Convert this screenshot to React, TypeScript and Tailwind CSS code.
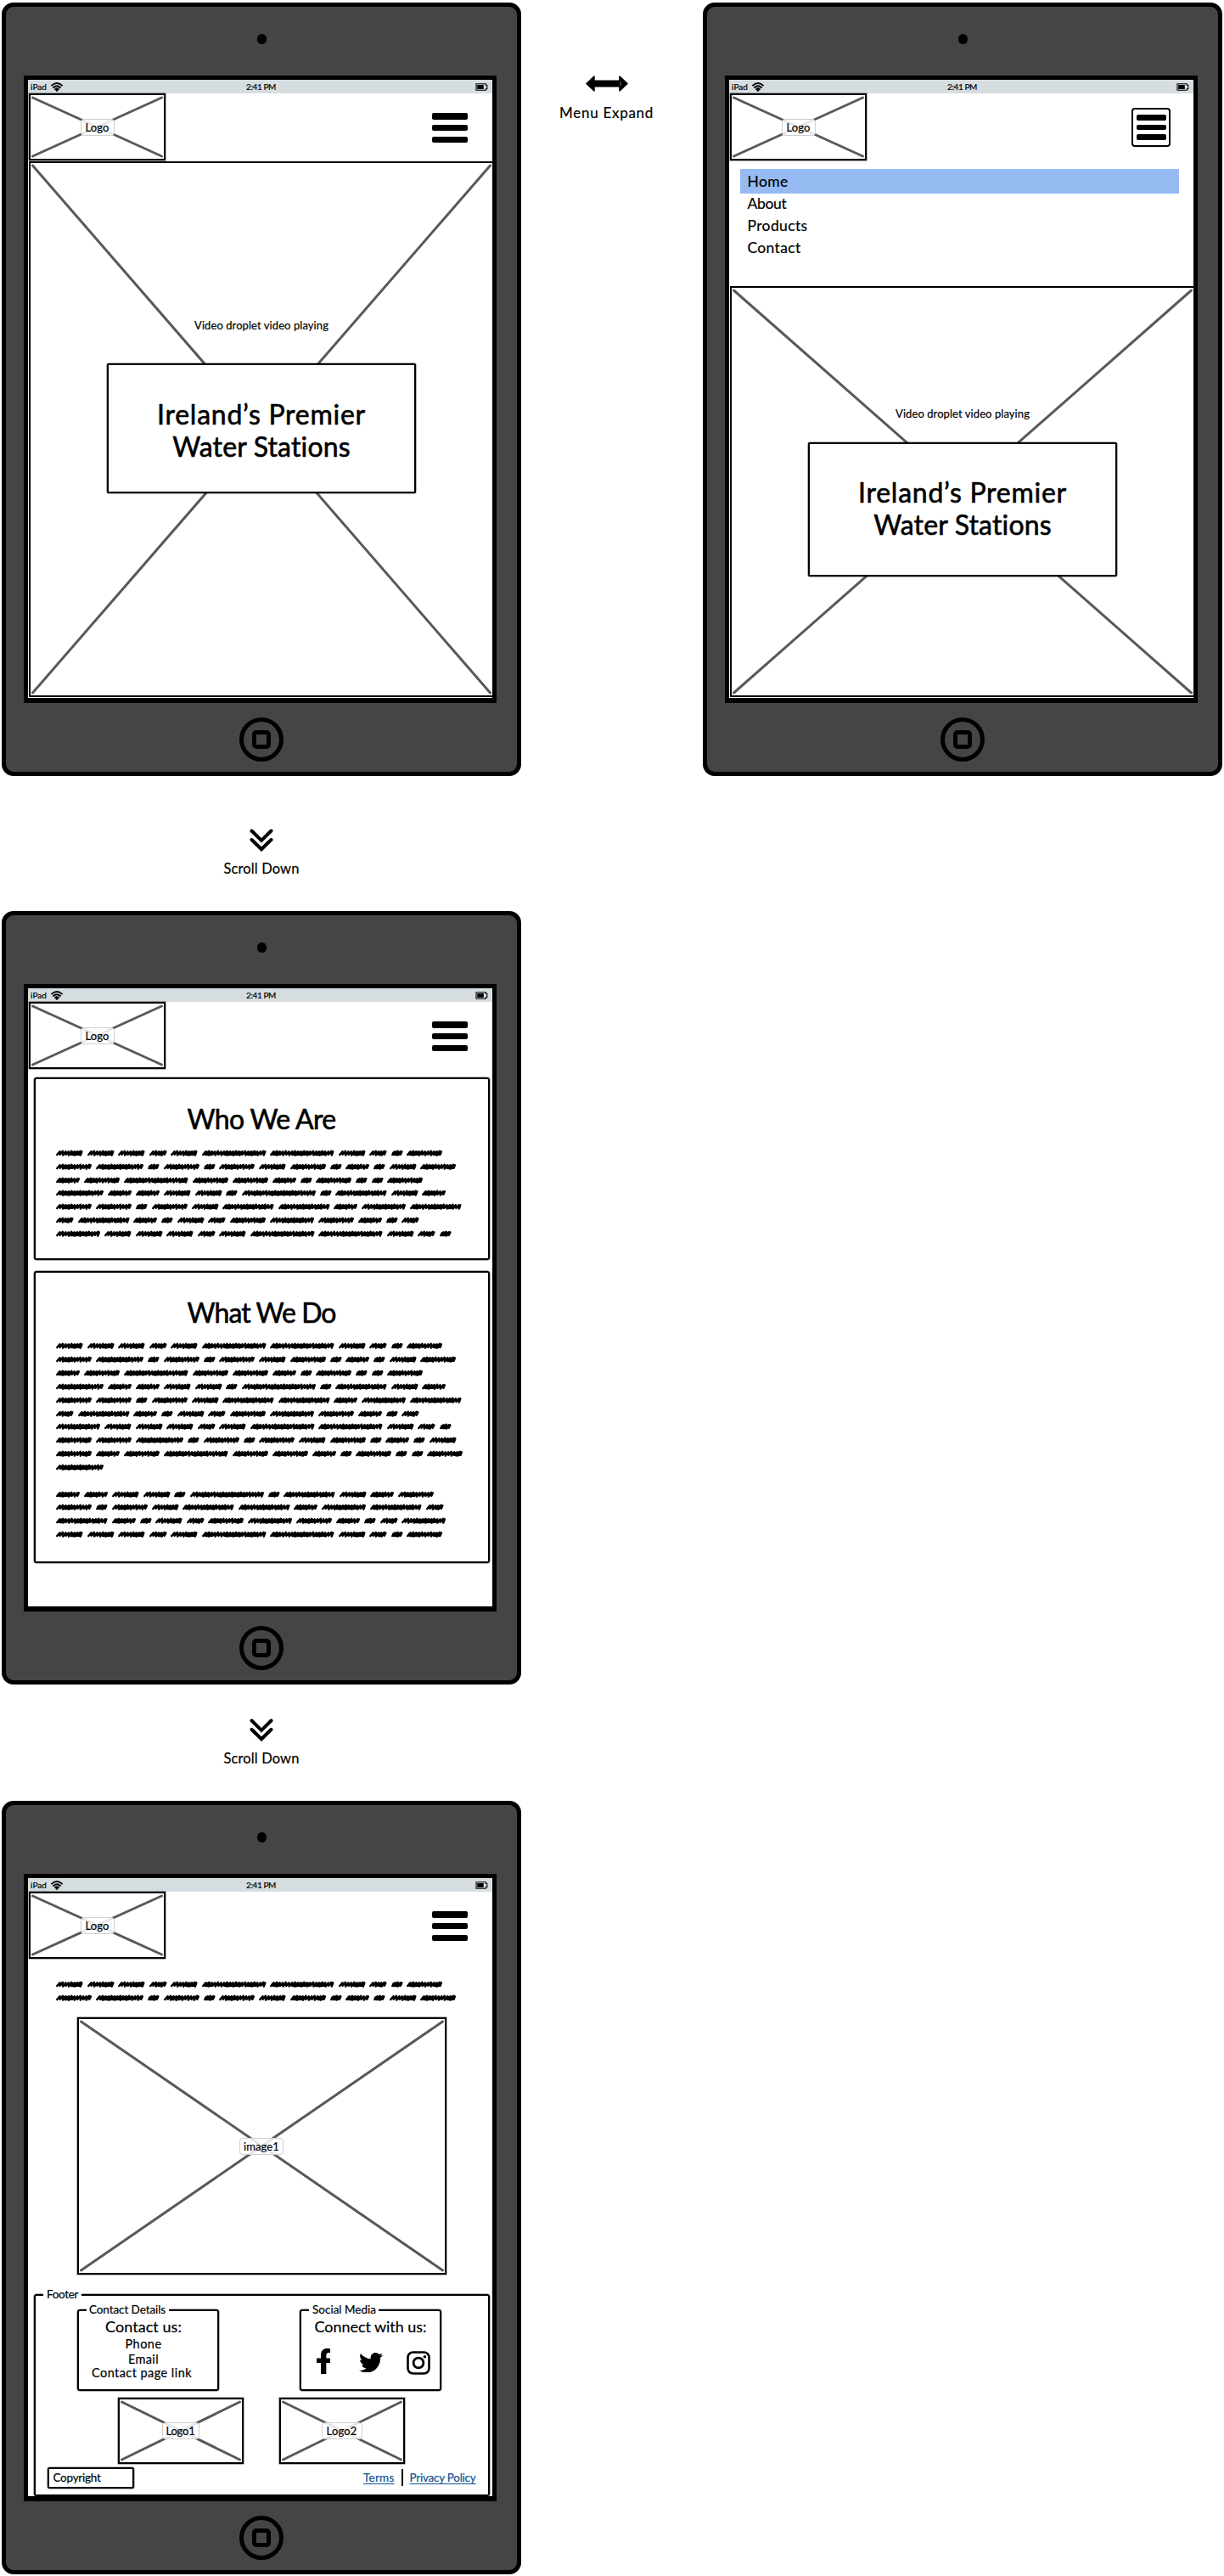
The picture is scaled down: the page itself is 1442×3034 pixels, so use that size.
import { useLayoutEffect, useRef, useState, type ReactNode } from "react";
import { FaFacebookF, FaTwitter } from "react-icons/fa";

/* Text whose letter spacing is adjusted so that the run is exactly `w` pixels wide. */
function Fit({ w, className = "", children }: { w: number; className?: string; children: string }) {
  const ref = useRef<HTMLSpanElement>(null);
  const [spacing, setSpacing] = useState(0);
  useLayoutEffect(() => {
    if (ref.current) {
      const natural = ref.current.getBoundingClientRect().width;
      setSpacing((w - natural) / children.length);
    }
  }, []);
  return (
    <span ref={ref} className={`inline-block whitespace-nowrap ${className}`} style={{ letterSpacing: `${spacing}px` }}>
      {children}
    </span>
  );
}

function Cross({ w, h }: { w: number; h: number }) {
  return (
    <svg className="absolute -top-0.5 -left-0.5" width={w} height={h} viewBox={`0 0 ${w} ${h}`}>
      <path
        d={`M4.5 5L${w - 4.5} ${h - 5}M${w - 4.5} 5L4.5 ${h - 5}`}
        stroke="#595959"
        strokeWidth="3"
        strokeLinecap="round"
        fill="none"
      />
    </svg>
  );
}

function Placeholder({ w, h, label, labelW, textW, box }: { w: number; h: number; label: string; labelW: string; textW: number; box: string }) {
  return (
    <div className={`relative flex shrink-0 items-center justify-center border-2 border-black bg-white ring-[0.5px] ring-black/60 ${box}`}>
      <Cross w={w} h={h} />
      <div className={`relative flex h-5 items-center justify-center rounded border border-[#cfcfcf] bg-white/85 ${labelW}`}>
        <Fit w={textW} className="text-[13px] leading-5">{label}</Fit>
      </div>
    </div>
  );
}

function StatusBar() {
  return (
    <div className="flex h-4 shrink-0 items-center bg-[#d6dde0] pl-[3px] text-[10px] leading-4">
      <Fit w={19}>iPad</Fit>
      <svg className="ml-[5px]" width="14" height="11" viewBox="0 0 14 11">
        <g fill="none" stroke="black" strokeLinecap="round" strokeWidth="1.9">
          <path d="M1 3.6Q7-1.6 13 3.6" />
          <path d="M3 6Q7 2.4 11 6" />
          <path d="M5 8.1Q7 6.3 9 8.1" />
        </g>
        <circle cx="7" cy="9.4" r="1.4" />
      </svg>
      <Fit w={35} className="ml-[216px]">2:41 PM</Fit>
      <svg className="ml-[235px]" width="15" height="9" viewBox="0 0 15 9">
        <path d="M1 .7H12.3V2.3H13.8V6.7H12.3V8.3H1Z" fill="#d6dde0" stroke="black" strokeWidth="1.1" />
        <rect x="2.2" y="2" width="7.6" height="5" />
      </svg>
    </div>
  );
}

function Header({ open = false }: { open?: boolean }) {
  return (
    <div className="flex h-[79px] shrink-0 pl-px">
      <Placeholder w={161} h={79} label="Logo" labelW="w-10" textW={28} box="h-[79px] w-[161px]" />
      {open ? (
        <div className="mt-[17px] ml-[312px] flex h-[46px] w-[46px] flex-col items-center justify-center gap-[5px] rounded-[4px] border-2 border-black">
          <i className="h-[6.5px] w-[35px] rounded-[2px] bg-black" />
          <i className="h-[6.5px] w-[35px] rounded-[2px] bg-black" />
          <i className="h-[6.5px] w-[35px] rounded-[2px] bg-black" />
        </div>
      ) : (
        <div className="mt-[23px] ml-[313.5px] flex w-[42px] flex-col gap-[6.3px]">
          <i className="h-[7.5px] rounded-[2px] bg-black" />
          <i className="h-[7.5px] rounded-[2px] bg-black" />
          <i className="h-[7.5px] rounded-[2px] bg-black" />
        </div>
      )}
    </div>
  );
}

function Tablet({ open, children }: { open?: boolean; children: ReactNode }) {
  return (
    <div className="flex h-[911px] w-[612px] shrink-0 flex-col rounded-[14px] border-5 border-black bg-[#454545]">
      <div className="mt-8 h-3 w-[11px] shrink-0 self-center rounded-full bg-black" />
      <div className="mt-[37px] ml-[21px] flex h-[739px] w-[557px] shrink-0 flex-col border-5 border-b-6 border-black bg-white">
        <StatusBar />
        <Header open={open} />
        {children}
      </div>
      <div className="mt-[17px] flex size-[52px] shrink-0 items-center justify-center self-center rounded-full border-5 border-black">
        <div className="size-[22px] rounded-[5px] border-5 border-black" />
      </div>
    </div>
  );
}

function Hero({ box, video, videoH, pad }: { box: string; video: string; videoH: number; pad: string }) {
  return (
    <div className={`relative ml-px flex w-[548px] shrink-0 flex-col items-center border-2 border-black bg-white ${video}`}>
      <Cross w={548} h={videoH} />
      <Fit w={158} className="relative text-[13px] leading-5">Video droplet video playing</Fit>
      <div className={`relative flex w-[364px] flex-col items-center rounded-[2px] border-2 border-black bg-white text-[32px] leading-[38px] ring-[0.5px] ring-black/60 [-webkit-text-stroke:0.6px] ${box} ${pad}`}>
        <Fit w={246}>Ireland’s Premier</Fit>
        <Fit w={210}>Water Stations</Fit>
      </div>
    </div>
  );
}

/* Width and heavily inked spans of every scribbled word form. */
const WORDS: Record<string, { w: number; ink: number[][] }> = {
  a: { w: 31.5, ink: [[0.55, 0.88]] },
  b: { w: 20.5, ink: [[0.5, 0.7]] },
  c: { w: 75.5, ink: [[0.04, 0.15], [0.35, 0.6], [0.7, 0.85]] },
  d: { w: 13.5, ink: [[0.15, 0.6]] },
  e: { w: 42, ink: [[0.07, 0.35], [0.75, 0.92]] },
  f: { w: 42, ink: [[0.22, 0.45]] },
  g: { w: 56, ink: [[0.12, 0.7]] },
  h: { w: 28, ink: [[0.1, 0.55]] },
  i: { w: 75.5, ink: [[0.04, 0.32], [0.45, 0.65], [0.87, 0.95]] },
  j: { w: 87, ink: [[0.15, 0.25], [0.38, 0.75]] },
  k: { w: 60.5, ink: [[0.05, 0.15], [0.38, 0.62], [0.72, 0.82]] },
  l: { w: 52, ink: [[0.32, 0.75]] },
};

function Scribble({ kind }: { kind: string }) {
  const { w, ink } = WORDS[kind];
  let d = "M1.3 6";
  const n = Math.round((w - 4) / 3.5);
  const step = (w - 4) / n;
  for (let k = 0; k < n; k++) {
    const x = 1.3 + k * step;
    d += `L${(x + 3.2).toFixed(1)} ${k % 3 === 1 ? 1.7 : 2.3}L${(x + step).toFixed(1)} ${k % 2 ? 6.6 : 5.8}`;
  }
  d += `L${w - 1.2} 2.4`;
  return (
    <svg className="shrink-0 overflow-visible" width={w} height="8" viewBox={`0 0 ${w} 8`} fill="none" stroke="black" strokeLinecap="round" strokeLinejoin="round">
      <path d={d} strokeWidth="2.5" />
      {ink.map(([from, to]) => (
        <path key={from} d={`M${from * w + 1.5} 4.6L${to * w} 4.3`} strokeWidth="5.2" />
      ))}
    </svg>
  );
}

function Scribbles({ rows }: { rows: string[] }) {
  return (
    <div className="flex flex-col">
      {rows.map((row, i) => (
        <div key={i} className="flex h-[15.83px] items-center gap-[5px]">
          {row.split("").map((k, j) => (
            <Scribble key={j} kind={k} />
          ))}
        </div>
      ))}
    </div>
  );
}

const WHO = ["aaabaccabde", "fgdfdfaedhdae", "heieehdedde", "ghhaadjdkah", "ffdfakkhlk", "bkhdabelfhdb", "laaabaccabd"];
const WHAT = [...WHO, "efgdfdfaedhda", "eheieehdedde", "g", "", "hhaadjdkahf", "fdfakkhlkb", "khdabelfhdbl", "aaabaccabde"];

function Panel({ title, rows, box }: { title: string; rows: string[]; box: string }) {
  return (
    <section className={`ml-[6.5px] flex w-[537px] shrink-0 flex-col rounded-[3px] border-2 border-black pt-[27px] ring-[0.5px] ring-black/60 ${box}`}>
      <Fit w={175} className="self-center text-[32px] leading-10 [-webkit-text-stroke:0.6px]">{title}</Fit>
      <div className="mt-3 ml-[24.5px]">
        <Scribbles rows={rows} />
      </div>
    </section>
  );
}

function ScrollDown({ box }: { box: string }) {
  return (
    <div className={`flex w-[612px] shrink-0 flex-col items-center ${box}`}>
      <svg width="28" height="27" viewBox="0 0 28 27" fill="none" stroke="black" strokeWidth="4" strokeLinecap="round">
        <path d="M2.5 2.5L14 14L25.5 2.5M2.5 13L14 24.3L25.5 13" />
      </svg>
      <Fit w={89} className="mt-2.5 text-[16.5px] leading-5">Scroll Down</Fit>
    </div>
  );
}

function Group({ label, labelBox, textW, className, children }: { label: string; labelBox: string; textW: number; className: string; children: ReactNode }) {
  return (
    <div className={`relative shrink-0 rounded-[3px] border-2 border-black ring-[0.5px] ring-black/60 ${className}`}>
      <div className={`absolute -top-3 flex h-5 items-center bg-white ${labelBox}`}>
        <Fit w={textW} className="text-[13.5px] leading-5">{label}</Fit>
      </div>
      {children}
    </div>
  );
}

function Footer() {
  return (
    <Group label="Footer" labelBox="left-[9.5px] w-[45px] pl-[4px]" textW={37} className="mt-[22.5px] ml-[6.5px] h-[238px] w-[537px]">
      <div className="mt-[16.5px] flex pl-[49px]">
        <Group label="Contact Details" labelBox="left-[9px] w-[97px] pl-[3.5px]" textW={90} className="flex h-[96px] w-[167px] flex-col items-center pt-2 pr-2.5 text-[14.5px] leading-[18px]">
          <Fit w={90} className="text-[18px] leading-5">Contact us:</Fit>
          <Fit w={43} className="mt-0.5">Phone</Fit>
          <Fit w={36}>Email</Fit>
          <Fit w={118} className="-mt-0.5 mr-1">Contact page link</Fit>
        </Group>
        <Group label="Social Media" labelBox="left-[9px] w-[82px] pl-[4px]" textW={75} className="ml-[95.5px] flex h-[96px] w-[167px] flex-col pt-2">
          <Fit w={132} className="self-center text-[18px] leading-5">Connect with us:</Fit>
          <div className="mt-4 flex h-[30px] items-center pl-[17.5px]">
            <FaFacebookF viewBox="22.9 0 256 512" preserveAspectRatio="none" className="h-[30px] w-4" />
            <FaTwitter viewBox="0 48 512 416" preserveAspectRatio="none" className="mt-[3px] ml-[34px] h-[23.5px] w-7" />
            <svg className="mt-[3px] ml-7" width="28" height="28" viewBox="0 0 28 28" fill="none" stroke="black" strokeWidth="2.6">
              <rect x="1.5" y="1.5" width="25" height="25" rx="6" />
              <circle cx="14" cy="14" r="5.9" strokeWidth="2.8" />
              <circle cx="21.4" cy="6.7" r="1.8" fill="black" stroke="none" />
            </svg>
          </div>
        </Group>
      </div>
      <div className="mt-2 flex gap-[42px] pl-[97px]">
        <Placeholder w={148} h={78} label="Logo1" labelW="w-[44px]" textW={34} box="h-[78px] w-[148px]" />
        <Placeholder w={148} h={78} label="Logo2" labelW="w-[48px]" textW={36} box="h-[78px] w-[148px]" />
      </div>
      <div className="mt-[3.5px] flex h-[25px] items-center pl-3.5 text-[13.5px] leading-5">
        <div className="flex h-[25px] w-[102.5px] items-center rounded-[2px] border-2 border-black pl-[5px] ring-[0.5px] ring-black/60">
          <Fit w={56}>Copyright</Fit>
        </div>
        <a className="ml-[270px] text-[#0b5394]"><Fit w={36.5} className="underline underline-offset-2">Terms</Fit></a>
        <i className="ml-2 h-5 w-0.5 bg-black" />
        <a className="ml-2 text-[#0b5394]"><Fit w={78} className="underline underline-offset-2">Privacy Policy</Fit></a>
      </div>
    </Group>
  );
}

export default function App() {
  return (
    <main className="flex h-[3034px] w-[1442px] items-start overflow-hidden bg-white pt-[3px] pl-0.5 font-['Lato',sans-serif] text-black [-webkit-text-stroke:0.2px]">
      <div className="flex flex-col">
        <Tablet>
          <Hero video="mt-px h-[631px] pt-[181px]" videoH={631} box="mt-[35px] h-[153px]" pad="pt-[39px]" />
        </Tablet>
        <ScrollDown box="h-[159px] pt-[62px]" />
        <Tablet>
          <Panel title="Who We Are" rows={WHO} box="mt-2.5 h-[215px]" />
          <Panel title="What We Do" rows={WHAT} box="mt-[12.5px] h-[344.5px]" />
        </Tablet>
        <ScrollDown box="h-[137px] pt-[39.5px]" />
        <Tablet>
          <div className="mt-[22.4px] ml-[33px] shrink-0">
            <Scribbles rows={WHO.slice(0, 2)} />
          </div>
          <div className="mt-[15px] ml-[57.5px] shrink-0">
            <Placeholder w={435} h={303} label="image1" labelW="w-[52px]" textW={42} box="h-[303px] w-[435px]" />
          </div>
          <Footer />
        </Tablet>
      </div>
      <div className="flex w-[214px] shrink-0 flex-col items-center pt-[86px] pr-[13px]">
        <svg width="50" height="19" viewBox="0 0 50 19">
          <path d="M1 9.5L10 1V18ZM49 9.5L40 1V18ZM8 6.3H42V12.7H8Z" stroke="black" strokeWidth="1.5" strokeLinejoin="round" />
        </svg>
        <Fit w={111} className="mt-[15px] text-[17px] leading-5">Menu Expand</Fit>
      </div>
      <Tablet open>
        <nav className="mt-2.5 ml-[13px] flex h-[138px] w-[517px] shrink-0 flex-col text-[17.5px] leading-[26.2px]">
          <div className="h-[29px] bg-[#95bbf2] pt-[2px] pl-[8.5px]"><Fit w={48}>Home</Fit></div>
          <div className="-mt-px flex flex-col items-start pl-[8.5px]">
            <Fit w={46}>About</Fit>
            <Fit w={71}>Products</Fit>
            <Fit w={63}>Contact</Fit>
          </div>
        </nav>
        <Hero video="h-[484px] pt-[138px]" videoH={484} box="mt-[23.5px] h-[158px]" pad="pt-[38px]" />
      </Tablet>
    </main>
  );
}
